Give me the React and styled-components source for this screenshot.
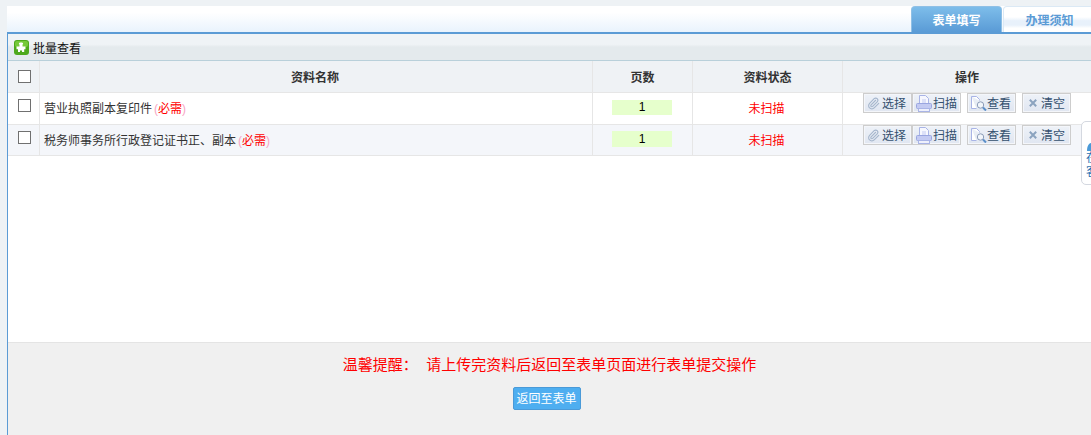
import React from 'react'
import styled, { createGlobalStyle } from 'styled-components'
import { Paperclip } from 'lucide-react'

const GlobalStyle = createGlobalStyle`
  html, body {
    margin: 0;
    padding: 0;
    height: 435px;
    overflow: hidden;
    background: #eef2f5;
    font-family: "Liberation Sans", "Noto Sans CJK SC", sans-serif;
    font-size: 12px;
  }
`

const Page = styled.div`
  position: relative;
  width: 1091px;
  height: 435px;
  padding: 6px 0 0 7px;
  box-sizing: border-box;
  overflow: hidden;
`
const TabBar = styled.div`
  display: flex;
  justify-content: flex-end;
  align-items: flex-end;
  height: 26px;
  gap: 1px;
  background: linear-gradient(#fff 0%, #fff 25%, #e9f3fd 100%);
  border-bottom: 2px solid #5b9bd5;
`
const Tab = styled.div`
  flex: none;
  width: ${p => p.$w}px;
  height: 26px;
  margin-right: ${p => (p.$active ? 0 : -5)}px;
  box-sizing: border-box;
  border: 1px solid ${p => (p.$active ? '#8fc0e6' : '#dbe9f5')};
  border-bottom: 0;
  border-radius: 4px 4px 0 0;
  display: flex;
  align-items: center;
  justify-content: center;
  font-size: 12px;
  font-weight: 700;
  color: ${p => (p.$active ? '#fff' : '#5b9bd5')};
  background: ${p => (p.$active ? 'linear-gradient(#7dbdea, #5a9bd6)' : 'linear-gradient(#fff 40%, #e8f1fb 55%, #e8f1fb 72%, #fff 85%)')};
`
const Panel = styled.div`
  height: 401px;
  border-left: 1px solid #5b9bd5;
  display: flex;
  flex-direction: column;
`
const TitleBar = styled.div`
  height: 27px;
  flex: none;
  display: flex;
  align-items: center;
  gap: 4px;
  padding-left: 6px;
  box-sizing: border-box;
  background: linear-gradient(#eff3f6 0%, #eff3f6 40%, #e4eaed 50%, #e4eaed 100%);
  border-bottom: 1px solid #b9d0da;
  color: #111;
  font-size: 12px;
`
const Table = styled.div`
  flex: 1;
  background: #fff;
`
const Row = styled.div`
  display: grid;
  grid-template-columns: 32px 553px 100px 150px 1fr;
  height: ${p => p.$h}px;
  box-sizing: border-box;
  border-bottom: 1px solid #e6e6e6;
  background: ${p => p.$bg};
`
const HeadCell = styled.div`
  display: flex;
  align-items: center;
  justify-content: center;
  border-right: 1px solid #e6e6e6;
  font-weight: 700;
  color: #333;
  &:first-child { padding-left: 2px; }
  &:nth-child(2) { padding-right: 2px; }
  &:last-child { border-right: 0; }
`
const Cell = styled.div`
  display: flex;
  align-items: center;
  justify-content: ${p => (p.$left ? 'flex-start' : 'center')};
  padding-left: ${p => (p.$left ? '4px' : 0)};
  padding-bottom: 2px;
  border-right: 1px solid #e6e6e6;
  color: #333;
`
const CheckCell = styled(Cell)`
  align-items: flex-start;
  padding: 6px 0 0 2px;
`
const Check = styled.span`
  width: 13px;
  height: 13px;
  box-sizing: border-box;
  border: 1px solid #707070;
  background: #fff;
  display: block;
`
const Required = styled.span`
  margin-left: 2px;
  color: #f00;
  &::before, &::after { color: #f7a6c4; }
  &::before { content: '('; }
  &::after { content: ')'; }
`
const PageCount = styled.div`
  width: 60px;
  height: ${p => p.$h}px;
  margin-right: 1px;
  background: #e6ffcc;
  color: #000;
  text-align: center;
  line-height: ${p => p.$h}px;
`
const Status = styled.span`
  margin-right: 2px;
  color: #f00;
`
const Actions = styled.div`
  display: flex;
  align-items: flex-start;
  padding-left: 20px;
`
const ActionBtn = styled.div`
  display: flex;
  align-items: center;
  flex: none;
  width: 49px;
  height: 20px;
  box-sizing: border-box;
  margin-left: ${p => p.$gap}px;
  padding-left: ${p => p.$pad}px;
  column-gap: ${p => p.$space}px;
  border: 1px solid #cdcdcd;
  box-shadow: inset 0 0 0 1px #f4f6fa;
  background: linear-gradient(#eef2f8, #e0e6f1);
  color: #34506e;
  svg { flex: none; }
`
const ActionLabel = styled.span`
  margin: 0 0 2px -1px;
`
const Footer = styled.div`
  height: 93px;
  flex: none;
  box-sizing: border-box;
  background: #f0f0f0;
  border-top: 1px solid #e4e4e4;
  display: flex;
  flex-direction: column;
  align-items: center;
  padding-top: 13px;
`
const Notice = styled.div`
  color: #f00;
  font-size: 15px;
  line-height: 18px;
  white-space: pre;
`
const BackBtn = styled.div`
  margin: 13px 6px 0 0;
  width: 68px;
  height: 23px;
  box-sizing: border-box;
  padding-bottom: 2px;
  border: 1px solid #4a9ad8;
  border-radius: 2px;
  background: #4eaef0;
  color: #fff;
  display: flex;
  align-items: center;
  justify-content: center;
`
const SideWidget = styled.div`
  position: absolute;
  left: 1081px;
  top: 121px;
  width: 30px;
  height: 64px;
  box-sizing: border-box;
  border: 1px solid #d4d8e0;
  border-radius: 5px;
  background: #fff;
  padding: 21px 0 0 4px;
  color: #2a6fb0;
  line-height: 14px;
  svg { display: block; margin-left: 1px; }
`

const PrintIcon = () => (
  <svg width="16" height="17" viewBox="0 0 16 17">
    <path d="M3.500 .5h6l3 3v6h-9z" fill="#f6f7fe" stroke="#a9b4e6" />
    <path d="M6 5h4M6 7h4" stroke="#c3caf2" />
    <rect x=".5" y="8.500" width="15" height="5" rx="1" fill="#c3caf2" stroke="#9aa6e0" />
    <rect x="2.500" y="13.500" width="11" height="3" fill="#eef0fc" stroke="#a9b4e6" />
  </svg>
)
const ViewIcon = () => (
  <svg width="16" height="15" viewBox="0 0 16 15" fill="none">
    <path d="M.5 .5h5l3 3v1M.5 .5v12h5" stroke="#a9b4e6" fill="#fff" />
    <circle cx="9.500" cy="9" r="3.200" stroke="#8c9cb8" fill="#f2f6fb" />
    <path d="m12 11.500 3 3" stroke="#5b8fc9" strokeWidth="2" />
  </svg>
)
const ClearIcon = () => (
  <svg width="8" height="8" viewBox="0 0 8 8" fill="none">
    <path d="m.8 .8 6.400 6.400m0-6.400-6.400 6.400" stroke="#8ba3bf" strokeWidth="2" />
  </svg>
)
const PuzzleIcon = () => (
  <svg width="15" height="15" viewBox="0 0 15 15">
    <rect width="15" height="15" rx="3" fill="#4ea91c" />
    <rect x="1" y="1" width="13" height="6" rx="2" fill="#76c93a" />
    <path d="M2.500 6.500h3V5c0-.8-.6-.8-.6-1.500C4.900 2.800 5.800 2.500 7 2.500s2.100.3 2.100 1c0 .7-.6.7-.6 1.500v1.500h3v2.700h-1.300v2.800H8V10.500H6V12H4V9.200H2.500z" fill="#fff" />
  </svg>
)
const AgentIcon = () => (
  <svg width="10" height="8" viewBox="0 0 10 8">
    <path d="M0 8c0-5 2-8 5-8s5 3 5 8z" fill="#4a9ad8" />
  </svg>
)

const buttons = [
  { label: '选择', icon: <Paperclip size={13} color="#a5b6cc" strokeWidth={2} />, gap: 0, pad: 3, space: 3 },
  { label: '扫描', icon: <PrintIcon />, gap: 0, pad: 3, space: 2 },
  { label: '查看', icon: <ViewIcon />, gap: 6, pad: 3, space: 1 },
  { label: '清空', icon: <ClearIcon />, gap: 6, pad: 6, space: 5 },
]

const rows = [
  { name: '营业执照副本复印件', bg: '#fff', h: 32, countH: 15 },
  { name: '税务师事务所行政登记证书正、副本', bg: '#f4f6fa', h: 31, countH: 16 },
]

const App = () => (
  <Page>
    <GlobalStyle />
    <TabBar>
      <Tab $active $w={91}>表单填写</Tab>
      <Tab $w={93}>办理须知</Tab>
    </TabBar>
    <Panel>
      <TitleBar><PuzzleIcon />批量查看</TitleBar>
      <Table>
        <Row $h={32} $bg="#eff2f5">
          <HeadCell><Check /></HeadCell>
          <HeadCell>资料名称</HeadCell>
          <HeadCell>页数</HeadCell>
          <HeadCell>资料状态</HeadCell>
          <HeadCell>操作</HeadCell>
        </Row>
        {rows.map(r => (
          <Row key={r.name} $h={r.h} $bg={r.bg}>
            <CheckCell><Check /></CheckCell>
            <Cell $left>{r.name}<Required>必需</Required></Cell>
            <Cell><PageCount $h={r.countH}>1</PageCount></Cell>
            <Cell><Status>未扫描</Status></Cell>
            <Actions>
              {buttons.map(b => (
                <ActionBtn key={b.label} $gap={b.gap} $pad={b.pad} $space={b.space}>
                  {b.icon}<ActionLabel>{b.label}</ActionLabel>
                </ActionBtn>
              ))}
            </Actions>
          </Row>
        ))}
      </Table>
      <Footer>
        <Notice>温馨提醒：  请上传完资料后返回至表单页面进行表单提交操作</Notice>
        <BackBtn>返回至表单</BackBtn>
      </Footer>
    </Panel>
    <SideWidget>
      <AgentIcon />
      在<br />客
    </SideWidget>
  </Page>
)

export default App
